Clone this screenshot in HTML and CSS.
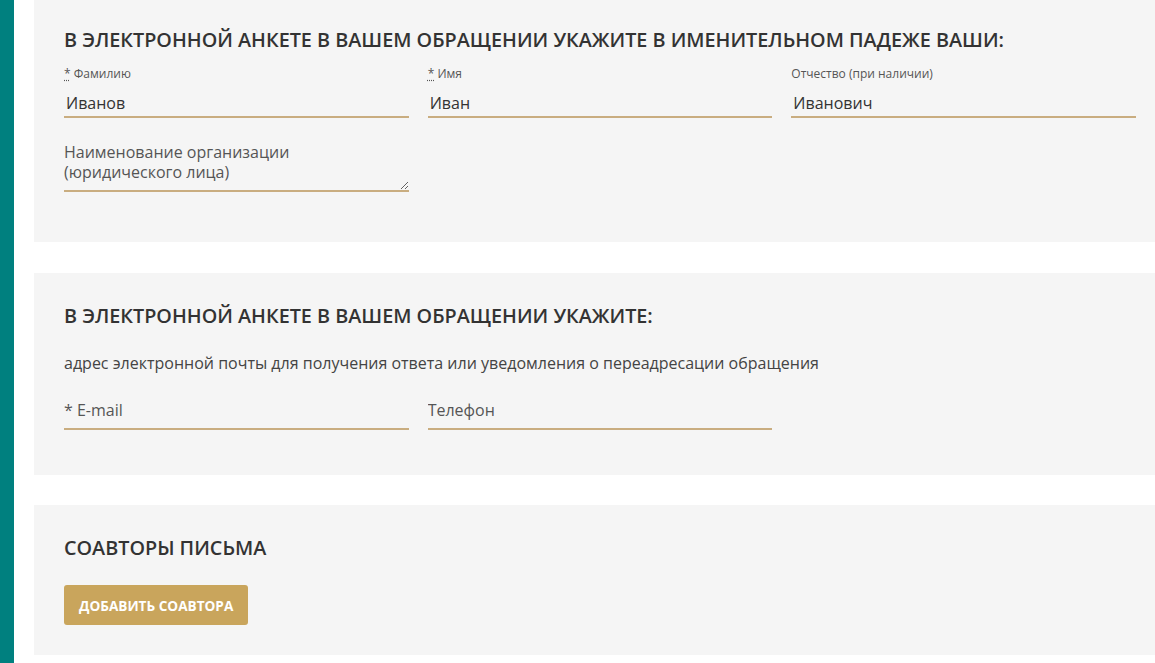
FILE: index.html
```html
<!DOCTYPE html>
<html lang="ru">
<head>
<meta charset="utf-8">
<title>Обращение</title>
<link rel="stylesheet" href="styles.css">
</head>
<body>
<div class="layout">
  <aside class="side"></aside>
  <main class="main">
    <section class="card card-first">
      <h2 class="card-title">В электронной анкете в вашем обращении укажите в именительном падеже ваши:</h2>
      <div class="grid">
        <div class="field">
          <label class="label"><abbr class="req" title="обязательно">*</abbr> Фамилию</label>
          <input class="input" type="text" value="Иванов">
        </div>
        <div class="field">
          <label class="label"><abbr class="req" title="обязательно">*</abbr> Имя</label>
          <input class="input" type="text" value="Иван">
        </div>
        <div class="field">
          <label class="label">Отчество (при наличии)</label>
          <input class="input" type="text" value="Иванович">
        </div>
        <div class="field field-org">
          <textarea class="textarea" rows="2" placeholder="Наименование организации&#10;(юридического лица)"></textarea>
        </div>
      </div>
    </section>

    <section class="card card-contacts">
      <h2 class="card-title">В электронной анкете в вашем обращении укажите:</h2>
      <p class="note">адрес электронной почты для получения ответа или уведомления о переадресации обращения</p>
      <div class="grid">
        <div class="field">
          <input class="input input-plain" type="email" placeholder="* E-mail">
        </div>
        <div class="field">
          <input class="input input-plain" type="tel" placeholder="Телефон">
        </div>
      </div>
    </section>

    <section class="card card-coauthors">
      <h2 class="card-title">Соавторы письма</h2>
      <button class="btn" type="button">Добавить соавтора</button>
    </section>
  </main>
</div>
</body>
</html>
```
FILE: styles.css
```css
html, body {
  margin: 0;
  padding: 0;
  background: #ffffff;
  overflow: hidden;
}
body {
  font-family: "Open Sans", "Noto Sans", "Liberation Sans", sans-serif;
  color: #333333;
  width: 1155px;
  height: 663px;
}
.layout {
  display: flex;
  min-height: 663px;
}
.side {
  flex: 0 0 14px;
  background: #00807f;
}
.main {
  flex: 0 0 auto;
  width: 1132px;
  padding-left: 20px;
}
.card {
  background: #f5f5f5;
  padding: 30px;
  box-sizing: border-box;
  width: 1132px;
}
.card-contacts {
  margin-top: 31px;
  padding-bottom: 45px;
}
.card-coauthors {
  margin-top: 30px;
}
.card-first {
  margin-top: -3px;
  padding-bottom: 50px;
}
.card-title {
  margin: 0;
  font-size: 19.8px;
  line-height: 26px;
  font-weight: 600;
  text-transform: uppercase;
  color: #333333;
}
.grid {
  display: grid;
  grid-template-columns: repeat(3, 1fr);
  column-gap: 19px;
  margin-top: 13px;
}
.field {
  display: flex;
  flex-direction: column;
}
.label {
  font-size: 12px;
  line-height: 15px;
  color: #555555;
  height: 15px;
}
.req {
  text-decoration: underline dotted;
  text-underline-offset: 2px;
  cursor: help;
}
.input {
  font-family: inherit;
  font-size: 16px;
  line-height: 20px;
  color: #333333;
  background: transparent;
  border: 0;
  border-bottom: 2px solid #c9ad80;
  padding: 12px 2px 3px 2px;
  margin: 0;
  outline: none;
  width: 100%;
  box-sizing: border-box;
}
.input::placeholder {
  color: #555555;
  opacity: 1;
}
.field-org {
  grid-column: 1;
  margin-top: 17px;
}
.textarea {
  font-family: inherit;
  font-size: 16px;
  line-height: 20px;
  color: #333333;
  background: transparent;
  border: 0;
  border-bottom: 2px solid #c9ad80;
  padding: 7px 0 8px 0;
  margin: 0;
  width: 100%;
  height: 57px;
  box-sizing: border-box;
  outline: none;
}
.textarea::placeholder {
  color: #555555;
  opacity: 1;
}
.note {
  margin: 23px 0 0 0;
  font-size: 16px;
  line-height: 22px;
  color: #444444;
}
.card-contacts .grid {
  margin-top: 18px;
}
.input-plain {
  padding: 8px 0 8px 0;
  font-size: 16px;
}
.btn {
  margin-top: 24px;
  display: inline-block;
  background: #c9a55c;
  color: #ffffff;
  border: 0;
  border-radius: 3px;
  height: 40px;
  padding: 0 15px;
  font-family: inherit;
  font-size: 13.6px;
  font-weight: 700;
  text-transform: uppercase;
  cursor: pointer;
}
```
